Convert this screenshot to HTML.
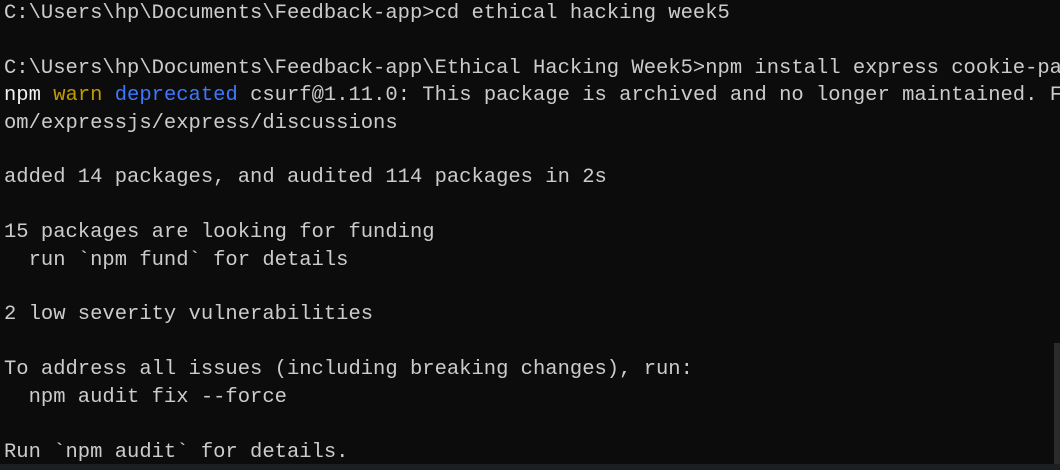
<!DOCTYPE html>
<html><head><style>
html,body{margin:0;padding:0;background:#0c0c0c;width:1060px;height:470px;overflow:hidden}
pre{margin:0;position:absolute;left:4px;top:0;font-family:"Liberation Mono",monospace;font-size:20.5px;line-height:27.4px;color:#cccccc;white-space:pre}
.y{color:#c19c00}.b{color:#3b78ff}.w{color:#f2f2f2}
.sb{position:absolute;left:1054px;top:343px;width:6px;height:127px;background:#2b2b2b}
.bt{position:absolute;left:0;top:464px;width:1060px;height:6px;background:#1a1f24}
</style></head><body>
<pre>C:\Users\hp\Documents\Feedback-app&gt;cd ethical hacking week5

C:\Users\hp\Documents\Feedback-app\Ethical Hacking Week5&gt;npm install express cookie-parser
<span class="w">npm</span> <span class="y">warn</span> <span class="b">deprecated</span> csurf@1.11.0: This package is archived and no longer maintained. For
om/expressjs/express/discussions

added 14 packages, and audited 114 packages in 2s

15 packages are looking for funding
  run `npm fund` for details

2 low severity vulnerabilities

To address all issues (including breaking changes), run:
  npm audit fix --force

Run `npm audit` for details.</pre>
<div class="sb"></div><div class="bt"></div>
</body></html>
